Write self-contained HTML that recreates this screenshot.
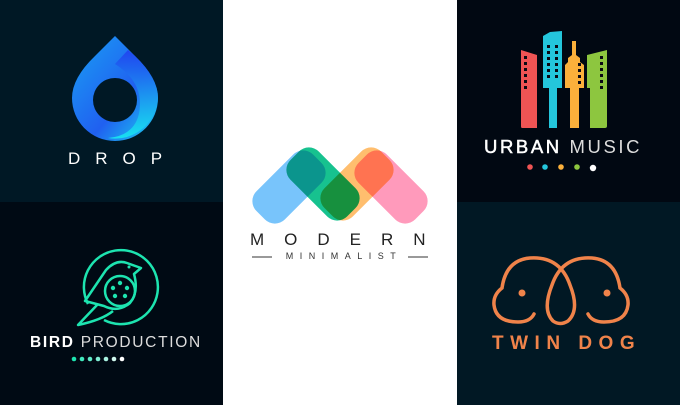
<!DOCTYPE html>
<html><head><style>
body{margin:0;width:680px;height:405px;overflow:hidden;position:relative;font-family:"Liberation Sans",sans-serif}
.p{position:absolute}
.t{position:absolute;white-space:nowrap;text-align:center}
.l{position:absolute;white-space:nowrap}
</style></head><body>
<div class="p" style="left:0;top:0;width:223px;height:202px;background:#001825"></div>
<div class="p" style="left:0;top:202px;width:223px;height:203px;background:#000a14"></div>
<div class="p" style="left:223px;top:0;width:234px;height:405px;background:#fff"></div>
<div class="p" style="left:457px;top:0;width:223px;height:202px;background:#010812"></div>
<div class="p" style="left:457px;top:202px;width:223px;height:203px;background:#011824"></div>

<svg class="p" style="left:0;top:0" width="680" height="405">
<defs>
<linearGradient id="dg" x1="0" y1="0" x2="1" y2="1">
<stop offset="0" stop-color="#1aa0f4"/><stop offset="0.6" stop-color="#2060f0"/><stop offset="1" stop-color="#1ad8f0"/></linearGradient>
<linearGradient id="dg2" x1="0" y1="0" x2="0" y2="1">
<stop offset="0" stop-color="#2040f0"/><stop offset="1" stop-color="#18e8f0"/></linearGradient>
</defs>
<path d="M115,36 L135,56 Q158,78 158,98 A43,43 0 0 1 72,98 Q72,78 95,56 Z" fill="url(#dg)"/>
<path d="M128,50 L135,56 Q158,78 158,98 A43,43 0 0 1 108,138 Q140,135 140,103 Q140,80 115,64 Z" fill="url(#dg2)" opacity="0.9"/>
<circle cx="115" cy="100" r="22" fill="#001825"/>
<g fill="none" stroke="#1de4b0" stroke-width="2.5" stroke-linejoin="round">
<path d="M88,304 A37,37 0 1 1 104,320"/>
<path d="M85,301 L106,270 Q116,259 127,263 L141,268 L134,274 Q139,292 130,303 Q118,313 104,306 L85,301 Z"/>
<circle cx="120" cy="291" r="15"/>
<path d="M98,304 L78,325 Q102,320 113,311"/>
</g>
<g fill="#1de4b0"><circle cx="120" cy="283" r="2.2"/><circle cx="113" cy="288" r="2.2"/><circle cx="127" cy="288" r="2.2"/><circle cx="115" cy="296" r="2.2"/><circle cx="125" cy="296" r="2.2"/><circle cx="129" cy="267" r="1.5"/></g>
<g><circle cx="74" cy="359" r="2.3" fill="#1de4b0"/><circle cx="82" cy="359" r="2.3" fill="#40e8bc"/><circle cx="90" cy="359" r="2.3" fill="#60eac8"/><circle cx="98" cy="359" r="2.3" fill="#80eed4"/><circle cx="106" cy="359" r="2.3" fill="#a8f2e0"/><circle cx="114" cy="359" r="2.3" fill="#d0f8ee"/><circle cx="122" cy="359" r="2.3" fill="#fff"/></g>
<g>
<rect x="-40" y="-20" width="80" height="40" rx="14" fill="#78c4fb" transform="translate(289,187) rotate(-45)" style="mix-blend-mode:multiply"/>
<rect x="-40" y="-20" width="80" height="40" rx="14" fill="#17c28f" transform="translate(323,184) rotate(45)" style="mix-blend-mode:multiply"/>
<rect x="-40" y="-20" width="80" height="40" rx="14" fill="#ffbe6e" transform="translate(357,184) rotate(-45)" style="mix-blend-mode:multiply"/>
<rect x="-40" y="-20" width="80" height="40" rx="14" fill="#ff9abb" transform="translate(391,187) rotate(45)" style="mix-blend-mode:multiply"/>
</g>
<line x1="252" y1="257" x2="272" y2="257" stroke="#333" stroke-width="1"/>
<line x1="408" y1="257" x2="428" y2="257" stroke="#333" stroke-width="1"/>
<g>
<path d="M521,50 L537,55 L537,128 L522,128 Q521,128 521,126 Z" fill="#ef5454"/>
<path d="M543,36 L550,32 L562,31 L562,88 L557,88 L557,128 L549,128 L549,88 L543,88 Z" fill="#24c6dc"/>
<path d="M572,41 L576,41 L576,55 L580,58 L580,62 L584,65 L584,88 L579,88 L579,128 L570,128 L570,88 L565,88 L565,65 L568,62 L568,58 L572,55 Z" fill="#fbb03b"/>
<path d="M587,55 L607,50 L607,126 Q607,128 605,128 L590,128 L590,88 L587,88 Z" fill="#8dc63f"/>
<g fill="#0a0a14">
<rect x="524" y="56" width="3" height="3"/><rect x="524" y="62" width="3" height="3"/><rect x="524" y="68" width="3" height="3"/><rect x="524" y="74" width="3" height="3"/><rect x="524" y="80" width="3" height="3"/><rect x="524" y="86" width="3" height="3"/>
<rect x="547" y="45" width="3" height="3"/><rect x="555" y="45" width="3" height="3"/><rect x="547" y="51" width="3" height="3"/><rect x="555" y="51" width="3" height="3"/><rect x="547" y="57" width="3" height="3"/><rect x="555" y="57" width="3" height="3"/><rect x="547" y="63" width="3" height="3"/><rect x="555" y="63" width="3" height="3"/><rect x="547" y="69" width="3" height="3"/><rect x="555" y="69" width="3" height="3"/><rect x="547" y="75" width="3" height="3"/><rect x="555" y="75" width="3" height="3"/>
<rect x="578" y="63" width="3" height="3"/><rect x="578" y="69" width="3" height="3"/><rect x="578" y="75" width="3" height="3"/><rect x="578" y="81" width="3" height="3"/>
<rect x="600" y="56" width="3" height="3"/><rect x="600" y="62" width="3" height="3"/><rect x="600" y="68" width="3" height="3"/><rect x="600" y="74" width="3" height="3"/><rect x="600" y="80" width="3" height="3"/><rect x="600" y="86" width="3" height="3"/>
</g>
<circle cx="530" cy="167" r="2.8" fill="#ef5454"/><circle cx="545" cy="167" r="2.8" fill="#24c6dc"/><circle cx="561" cy="167" r="2.8" fill="#fbb03b"/><circle cx="577" cy="167" r="2.8" fill="#8dc63f"/><circle cx="593" cy="168" r="3.2" fill="#fff"/>
</g>
<g fill="none" stroke="#f0834a" stroke-width="3.5" stroke-linecap="round">
<path d="M534,314 Q530,322 518,322 Q496,322 494,305 Q493,295 502,288 Q506,260 530,258 Q560,256 570,285 Q580,310 568,321 Q560,326 553,321 Q542,310 552,285 Q562,256 592,258 Q616,260 620,288 Q629,295 628,305 Q626,322 604,322 Q592,322 588,314"/>
</g>
<circle cx="522" cy="293" r="3.5" fill="#f0834a"/><circle cx="607" cy="293" r="3.5" fill="#f0834a"/>
</svg>

<div class="l" style="left:68px;top:149px;color:#fff;font-size:17px;letter-spacing:15px;font-weight:300">DROP</div>
<div class="l" style="left:30px;top:334px;color:#fff;font-size:15.5px;letter-spacing:1.7px"><b>BIRD</b> <span style="color:#ddd">PRODUCTION</span></div>
<div class="l" style="left:250px;top:230px;color:#222;font-size:17px;letter-spacing:20px">MODERN</div>
<div class="t" style="left:272px;top:251px;width:136px;color:#333;font-size:9px;letter-spacing:6.5px;padding-left:4px">MINIMALIST</div>
<div class="l" style="left:484px;top:136px;color:#fff;font-size:18.5px;letter-spacing:2.6px"><span style="-webkit-text-stroke:0.5px #fff">URBAN</span> <span style="color:#ddd">MUSIC</span></div>
<div class="l" style="left:492px;top:333px;color:#f0834a;font-size:19px;font-weight:bold;letter-spacing:6.5px">TWIN DOG</div>
</body></html>
